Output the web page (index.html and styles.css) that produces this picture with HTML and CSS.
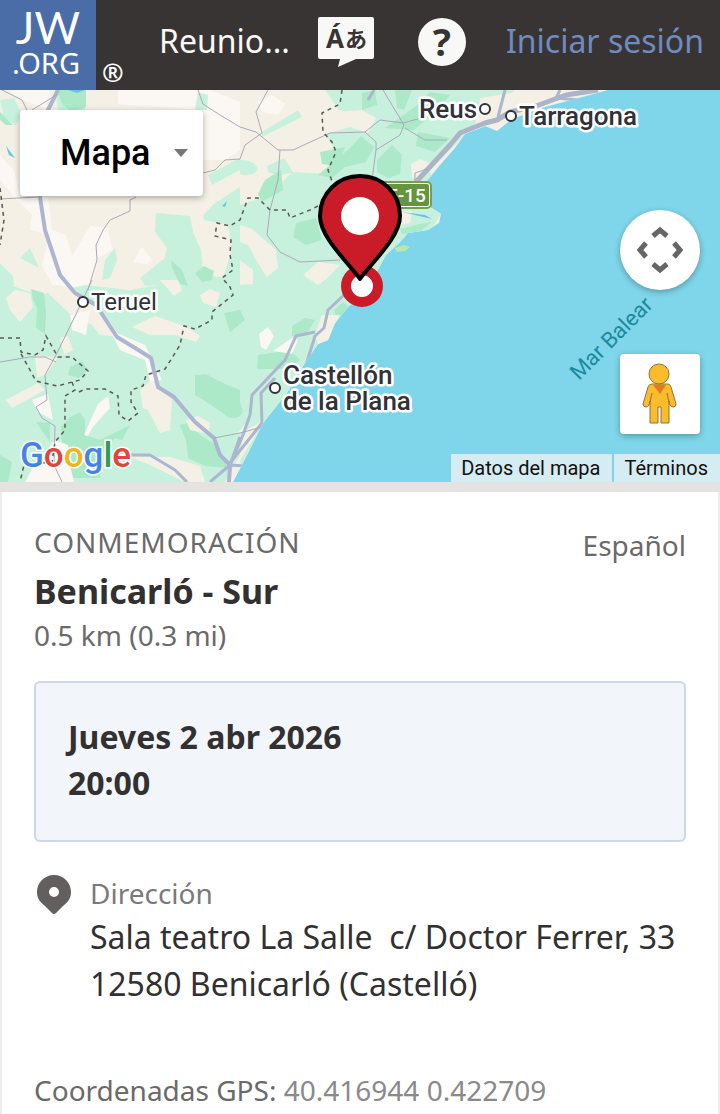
FILE: index.html
```html
<!DOCTYPE html>
<html lang="es">
<head>
<meta charset="UTF-8">
<meta name="viewport" content="width=device-width, initial-scale=1.0">
<title>Reuniones - JW.ORG</title>
<link rel="stylesheet" href="styles.css">
</head>
<body>

<header class="site-header">
  <a class="logo" href="#"><span class="logo-jw">JW</span><span class="logo-org">.ORG</span></a>
  <span class="registered">®</span>
  <nav class="site-nav">
    <a class="nav-title" href="#">Reunio...</a>
    <button class="icon-btn" type="button" aria-label="Idioma">
      <svg width="56" height="50" viewBox="0 0 56 50">
        <path fill="#f8f8f7" d="M2 0H54Q56 0 56 2V40Q56 42 54 42H38L20 50L22 42H2Q0 42 0 40V2Q0 0 2 0Z"/>
        <text class="lang-glyph" x="8" y="31">Á</text>
        <text class="lang-glyph lang-kana" x="27" y="30">あ</text>
      </svg>
    </button>
    <a class="help" href="#" aria-label="Ayuda">?</a>
    <a class="login" href="#">Iniciar sesión</a>
  </nav>
</header>

<section class="map">
  <svg class="map-canvas" viewBox="0 0 720 392" preserveAspectRatio="xMidYMid slice">
    <rect width="720" height="392" fill="#7fd6ea"/>
    <clipPath id="land">
      <path d="M0 0H608L575 9L545 17L512 29L497 41L485 36L465 44L455 58L440 75L422 97L424 113L441 124L439 133L428 140L408 143L400 152L386 165L374 187L360 207L348 217L335 233L328 250L318 254L305 273L287 303L263 333L248 363L233 392H0Z"/>
    </clipPath>
    <g clip-path="url(#land)">
      <rect width="720" height="392" fill="#f5f0e5"/>
      <!-- pale uplands -->
      <g fill="#fbf7f3">
        <path d="M118 0H210L240 12V60L225 70H203V20L118 14Z"/>
        <path d="M0 65L14 80L20 108L48 107L52 140L66 145L72 166L90 136L108 138L112 160L98 168L94 190L60 210L42 175L50 145L30 140L32 125L14 107L0 90Z"/>
        <path d="M133 172L142 157L152 170L147 174Z"/>
        <path d="M258 12L272 5L286 14L278 25L262 22Z"/>
        <path d="M8 0H50L46 18L22 10Z"/>
      </g>
      <!-- light vegetation -->
      <g fill="#c8f1dd">
        <path d="M0 10L14 8L22 25L16 35L4 28ZM198 2L208 5L207 20L195 20ZM55 0H85V20H58Z"/>
        <path d="M156 123L190 126L193 142L201 160L204 192L145 196L140 188L165 168L167 158L155 142Z"/>
        <path d="M208 85L240 68V80L212 95ZM203 125L215 113L240 97V190H222L232 160L228 135L204 130Z"/>
        <path d="M0 173L13 186L14 196L0 197ZM20 168L30 158L39 178ZM102 190L105 170L115 158L117 170L110 188Z"/>
        <path d="M262 42L298 20L302 27L262 47ZM240 70Q256 70 258 80Q250 88 240 84ZM267 76L284 68L293 82L278 86L268 82Z"/>
        <path d="M325 0H440L515 0L480 30L452 58L430 80L441 124L430 142L395 160L350 225L300 300L230 392H205L232 365L240 190L240 115L270 105L292 82L325 84L335 60L325 44L350 37L368 43L376 28L362 20L340 22Z"/>
        <path d="M0 192L40 205L85 195L130 200L210 186L260 192L330 195L315 255L285 300L240 370L228 392H0Z"/>
      </g>
      <!-- denser forest -->
      <g fill="#abe9c9">
        <path d="M57 0H86V17L72 22L62 14ZM0 22L13 35L6 35L0 30ZM171 170L182 180L188 196L180 194L172 178Z"/>
        <path d="M195 183L204 176L214 181L212 190L202 192ZM258 104L265 90L281 80L283 100L262 112Z"/>
        <path d="M296 133L316 128L322 150L306 155L293 147ZM318 85L350 58L361 46L374 57L366 72L345 77L332 88Z"/>
        <path d="M377 70L392 55L402 65L400 84L388 88L377 82ZM385 38L416 16L430 2L450 5L438 20L414 40ZM418 42L450 48L435 62L416 56Z"/>
        <path d="M395 0H412L404 20L397 18ZM362 3L375 0L377 15L362 20ZM320 62L345 57L338 76L322 74Z"/>
        <path d="M31 199L44 203L46 223L45 244L36 238L37 218L33 210ZM70 277L82 271L88 280L79 288L68 285Z"/>
        <path d="M61 337L70 327L80 322L85 330L85 345L100 350L130 335L122 350L115 348L100 365V388L72 388L62 366ZM36 332L50 333L50 352Z"/>
        <path d="M180 335L188 333L200 345L216 355L228 378L205 376L188 368L186 350ZM195 285L206 284L225 294L240 300V326L224 324L208 313L195 305Z"/>
        <path d="M220 294Q238 298 243 322Q237 332 226 326ZM258 265L290 260L300 270L288 279H257ZM224 223L240 220L245 230L230 242ZM292 236L305 228L315 230L306 245L292 246ZM334 220L343 212L352 219L338 232Z"/>
        <path d="M400 139L420 134L432 132L418 143L402 144ZM0 365L12 372L8 392H0Z"/>
      </g>
      <!-- farmland and towns inside the green -->
      <g fill="#f5f0e5">
        <path d="M240 135L252 139L276 160L278 178L267 187L258 173L248 155L240 152ZM240 170L253 180V194L240 195ZM303 185L318 172L340 175L325 190L318 195Z"/>
        <path d="M6 208L15 200L30 203L33 217L20 232L10 220ZM45 195L70 196L98 215L120 247L100 245L92 235L70 224L50 205ZM132 237L155 226L187 237L200 246L196 252L175 245L150 245Z"/>
        <path d="M160 190H178L182 200L174 206ZM200 205L210 199L220 203L216 217L203 213ZM35 265L58 268L45 285L37 288ZM6 310L38 293L45 300L12 318ZM60 248L68 246L73 260L64 265Z"/>
        <path d="M140 300L152 290L162 300L172 310L170 340L160 343L148 320L143 318ZM130 367L170 367L200 376L205 392H185L150 375ZM186 330L198 326L210 333L208 344L190 340Z"/>
        <path d="M352 24L340 20L337 25L345 38L363 33ZM411 74L420 69L432 74L422 88H412ZM375 123L412 121L410 133L376 140ZM480 8L530 0H600L540 18L505 30L474 42Z"/>
        <path d="M315 245L322 225L340 225L328 252L318 254ZM236 345L245 334L240 365L225 392H245L240 370L265 330Z"/>
      </g>
      <g fill="#fbf7f3">
        <path d="M84 345L98 314L108 306L110 318L92 338L88 346ZM32 310L48 304L53 330L38 322ZM55 350L68 355L70 375L74 392H25L34 375ZM70 225L90 220L86 245L72 240ZM110 240L145 255L162 290L150 292L145 270L120 260Z"/>
        <path d="M259 244L268 237L274 246L266 260L261 257ZM273 261L292 248L298 250L292 264Z"/>
      </g>
      <!-- motorways -->
      <g fill="none" stroke="#adb6d0" stroke-width="4" stroke-linejoin="round">
        <path d="M58 0L48 20L40 107L45 140L60 185L75 203L96 215L117 247L140 261L151 268L158 297L174 307L195 332L214 348L220 365L230 375L229 392"/>
        <path d="M128 365H150L175 380L187 392M240 347L230 375L210 392M230 375L245 376" stroke-width="3"/>
        <path d="M344 205L328 220L324 238L315 246L306 275M315 242L296 246L285 270L252 305L250 325L243 345L230 375M275 288L261 303L262 333L230 373" stroke-width="3"/>
        <path d="M402 118L416 92L450 55L460 43L485 33L497 30L510 22L536 16L566 5L598 0" stroke-width="5" stroke="#adb4c8"/>
        <path d="M505 0L498 27M560 0L556 8L578 10M374 0L368 10" stroke-width="3"/>
      </g>
      <!-- secondary roads -->
      <g fill="none" stroke="#a8a9bb" stroke-width="1">
        <path d="M2 0L22 10L27 20M58 4L32 20M0 109L38 107M88 200L97 170L96 155L103 140L110 130L130 121L130 110L136 107"/>
        <path d="M198 0L203 14L220 25L240 37L256 42L278 60L293 60L330 43L365 42L380 30L403 33L425 27M268 0L256 22L262 43L245 55L240 69L225 70L215 80L203 83"/>
        <path d="M383 0L395 20L404 35L400 45L376 60L372 90M365 42L376 52V60M280 60L278 90L270 120L267 145L280 162L300 172L340 170M405 38L425 50L447 50M415 90V83L427 79"/>
        <path d="M92 190L78 220L56 265L45 285L47 310L36 317L42 328L55 336L54 375L62 392M0 272L30 267L45 267L56 272M214 348L240 343L262 337"/>
      </g>
      <!-- provincial borders -->
      <g fill="none" stroke="#595955" stroke-width="1.5" stroke-dasharray="4 4">
        <path d="M0 248H20L21 262L35 265L43 260L46 246L58 267H72L88 281L80 290L57 296L36 291L30 280L20 262"/>
        <path d="M72 292L75 300L65 306V340L55 352L52 372L24 375L20 392M79 302L85 299H105L118 306L119 325L128 331L138 323L131 312V300L143 296L146 285L165 279L172 268L180 255L184 236L195 239L212 230V222L233 205L230 197L222 188L233 180L230 165L231 150L215 146L217 133L230 136L240 130L248 108L258 108L270 120H287L290 128L310 120L320 115"/>
        <path d="M342 0L340 14L322 23L323 42L332 52L336 62L328 80L333 94M0 98L4 130L0 155"/>
      </g>
      <path fill="#69c5df" d="M6 56L15 68L9 65ZM222 116L227 111L225 117ZM68 0L85 0L77 3ZM402 122L425 125L432 129Z"/>
    </g>
    <path fill="#b9e9a7" d="M395 158L404 155L410 157L405 161L397 162Z"/>
    <!-- road shield -->
    <rect x="380" y="92" width="51" height="26" rx="4" fill="#fff" stroke="#7b9b50" stroke-width="2"/>
    <rect x="382" y="94" width="47" height="22" rx="2" fill="#659541"/>
    <text class="shield" x="387" y="112">E-15</text>
    <g fill="#fff" stroke="#303238" stroke-width="2">
      <circle cx="485" cy="19" r="5"/>
      <circle cx="511" cy="26" r="5"/>
      <circle cx="83" cy="212" r="5"/>
      <circle cx="275" cy="298" r="5"/>
    </g>
    <text class="city" x="419" y="28">Reus</text>
    <text class="city" x="519" y="35">Tarragona</text>
    <text class="city city-small" x="91" y="220">Teruel</text>
    <text class="city" x="283" y="294">Castellón</text>
    <text class="city" x="283" y="320">de la Plana</text>
    <text class="sea" transform="translate(579 291) rotate(-45)">Mar Balear</text>
    <text class="google" x="20" y="377"><tspan fill="#4583ea">G</tspan><tspan fill="#e0463c">o</tspan><tspan fill="#edb51f">o</tspan><tspan fill="#4583ea">g</tspan><tspan fill="#369a55">l</tspan><tspan fill="#e0463c">e</tspan></text>
    <!-- meeting place -->
    <circle cx="362" cy="196" r="16" fill="#fff" stroke="#c91b28" stroke-width="10"/>
    <path fill="#c91b28" stroke="#000" stroke-width="4" stroke-linejoin="round" d="M360 189C350 174 320 148 320 126C320 103 338 86 360 86C382 86 400 103 400 126C400 148 370 174 360 189Z"/>
    <circle cx="360" cy="126" r="19" fill="#fff"/>
  </svg>

  <button class="map-type" type="button">Mapa
    <svg width="16" height="10" viewBox="0 0 16 10"><path fill="#777" d="M1 1H15L8 9Z"/></svg>
  </button>
  <div class="map-controls">
    <button class="map-pan" type="button" aria-label="Controles de la cámara del mapa">
      <svg width="48" height="48" viewBox="0 0 48 48" fill="none" stroke="#666" stroke-width="5">
        <path d="M17 10L24 4L31 10M17 38L24 44L31 38M10 17L4 24L10 31M38 17L44 24L38 31"/>
      </svg>
    </button>
    <button class="map-pegman" type="button" aria-label="Street View">
      <svg width="36" height="62" viewBox="0 0 36 62" stroke="#8f713f" stroke-width="1" stroke-linejoin="round" fill="#fbbc2c">
        <path d="M10 21H26Q28 21 29 24L34 41Q34 44 31 44Q29 44 28 42L27 38V60H19V44H16V60H8V38L7 42Q6 44 4 44Q1 44 1 41L6 24Q7 21 10 21Z"/>
        <path d="M8 39L10 30M27 39L25 30" fill="none"/>
        <path fill="#e27a25" stroke="none" d="M11 22H24L18 31Z"/>
        <circle cx="17" cy="11" r="10"/>
      </svg>
    </button>
  </div>
  <div class="map-legal">
    <a href="#">Datos del mapa</a>
    <a href="#">Términos</a>
  </div>
</section>

<main class="card">
  <div class="card-head">
    <div>
      <p class="kind">CONMEMORACIÓN</p>
      <h1>Benicarló - Sur</h1>
      <p class="distance">0.5 km (0.3 mi)</p>
    </div>
    <p class="language">Español</p>
  </div>

  <div class="schedule">
    <p>Jueves 2 abr 2026</p>
    <p>20:00</p>
  </div>

  <div class="address">
    <svg class="address-icon" width="40" height="44" viewBox="-2 -1 40 44">
      <path fill="#625f5e" fill-rule="evenodd" d="M18 1C28 1 35 9 35 18C35 25 31 29 27 32L20 39Q18 41 16 39L9 32C5 29 1 25 1 18C1 9 8 1 18 1ZM18 13A5 5 0 1 0 18 23A5 5 0 1 0 18 13Z"/>
    </svg>
    <div>
      <p class="label">Dirección</p>
      <address>Sala teatro La Salle&nbsp; c/ Doctor Ferrer, 33<br>12580 Benicarló (Castelló)</address>
    </div>
  </div>

  <p class="gps">Coordenadas GPS: <a href="#">40.416944 0.422709</a></p>
</main>

</body>
</html>
```
FILE: styles.css
```css
* {
  box-sizing: border-box;
}
body {
  margin: 0;
  background-color: #e5e3e2;
  color: #323031;
  font-family: "Noto Sans", sans-serif;
  font-size: 28px;
}
p, h1 {
  margin: 0;
}
a {
  color: inherit;
  text-decoration: none;
}
button {
  padding: 0;
  border: none;
  cursor: pointer;
}
.site-header {
  display: flex;
  height: 90px;
  background-color: #383433;
}
.logo {
  display: flex;
  flex-direction: column;
  align-items: flex-end;
  width: 96px;
  padding: 2px 16px 0 0;
  background-color: #4a6da7;
  color: #fff;
}
.logo-jw {
  font-family: Lato, sans-serif;
  font-size: 44px;
  line-height: 50px;
}
.logo-org {
  font-size: 29px;
  line-height: 22px;
}
.registered {
  align-self: flex-end;
  margin-left: 6px;
  color: #fff;
  font-size: 26px;
  font-weight: 600;
  line-height: 36px;
}
.site-nav {
  display: flex;
  flex: 1;
  align-items: center;
  justify-content: flex-end;
  gap: 28px;
  padding: 0 16px 6px 0;
  font-size: 32px;
  white-space: nowrap;
}
.nav-title,
.login {
  padding-bottom: 4px;
}
.nav-title {
  color: #f8f8f7;
}
.icon-btn {
  display: flex;
  background: none;
}
.lang-glyph {
  font: bold 26px "Noto Sans", sans-serif;
  fill: #383433;
}
.lang-kana {
  font: bold 22px "Noto Sans CJK JP", sans-serif;
}
.help {
  width: 48px;
  height: 48px;
  margin: 0 12px 0 16px;
  border-radius: 50%;
  background-color: #f8f8f7;
  color: #383433;
  font-size: 38px;
  font-weight: bold;
  line-height: 46px;
  text-align: center;
}
.login {
  color: #6f8bc0;
}

/* Map */
.map {
  position: relative;
  height: 392px;
  overflow: hidden;
  font-family: Roboto, sans-serif;
}
.map-canvas {
  display: block;
  width: 100%;
  height: 100%;
}
.city {
  font: 500 26px Roboto, sans-serif;
  fill: #303238;
  stroke: #fff;
  stroke-width: 5px;
  stroke-linejoin: round;
  paint-order: stroke;
}
.city-small {
  font-size: 24px;
  font-weight: 400;
}
.sea {
  font: 22px Roboto, sans-serif;
  fill: #1d8a9d;
}
.shield {
  font: 500 19px Roboto, sans-serif;
  fill: #fff;
}
.google {
  font: 500 35px Roboto, sans-serif;
  stroke: #fff;
  stroke-width: 3px;
  paint-order: stroke;
}
.map-type {
  position: absolute;
  top: 20px;
  left: 20px;
  display: flex;
  align-items: center;
  gap: 22px;
  height: 86px;
  padding: 0 14px 0 40px;
  border-radius: 4px;
  background-color: #fff;
  box-shadow: 0 2px 6px rgba(0, 0, 0, 0.3);
  color: #000;
  font: 500 36px Roboto, sans-serif;
}
.map-controls {
  position: absolute;
  top: 120px;
  right: 20px;
  display: grid;
  gap: 64px;
}
.map-pan,
.map-pegman {
  display: flex;
  align-items: center;
  justify-content: center;
  width: 80px;
  height: 80px;
  border-radius: 4px;
  background-color: #fff;
  box-shadow: 0 2px 6px rgba(0, 0, 0, 0.3);
}
.map-pan {
  border-radius: 50%;
}
.map-legal {
  position: absolute;
  right: 0;
  bottom: 0;
  display: flex;
  gap: 2px;
  color: #111;
  font-size: 20px;
  line-height: 28px;
}
.map-legal a {
  padding: 0 12px 0 10px;
  background-color: #d5ecf3;
}

/* Meeting card */
.card {
  min-height: calc(100vh - 492px);
  margin-top: 10px;
  padding: 30px 32px 0;
  border: solid #eeedec;
  border-width: 0 2px;
  background-color: #fff;
  color: #323031;
}
.card-head {
  display: flex;
  justify-content: space-between;
}
.kind,
.distance,
.language,
.label,
.gps {
  color: #6b696a;
  line-height: 40px;
}
.kind {
  letter-spacing: 1px;
}
h1 {
  margin-top: 5px;
  font-size: 34px;
  line-height: 48px;
}
.language {
  padding-top: 3px;
}
.schedule {
  margin-top: 26px;
  padding: 31px 32px 34px;
  border: 2px solid #ccd9e8;
  border-radius: 6px;
  background-color: #f2f6fb;
  font-size: 32px;
  font-weight: bold;
  line-height: 46px;
}
.address {
  display: flex;
  gap: 16px;
  margin-top: 31px;
}
.address-icon {
  flex: none;
}
.label {
  color: #7b797a;
}
address {
  font-size: 32px;
  font-style: normal;
  line-height: 47px;
}
.gps {
  margin-top: 63px;
  padding-bottom: 20px;
}
.gps a {
  color: #8b898a;
}
```
